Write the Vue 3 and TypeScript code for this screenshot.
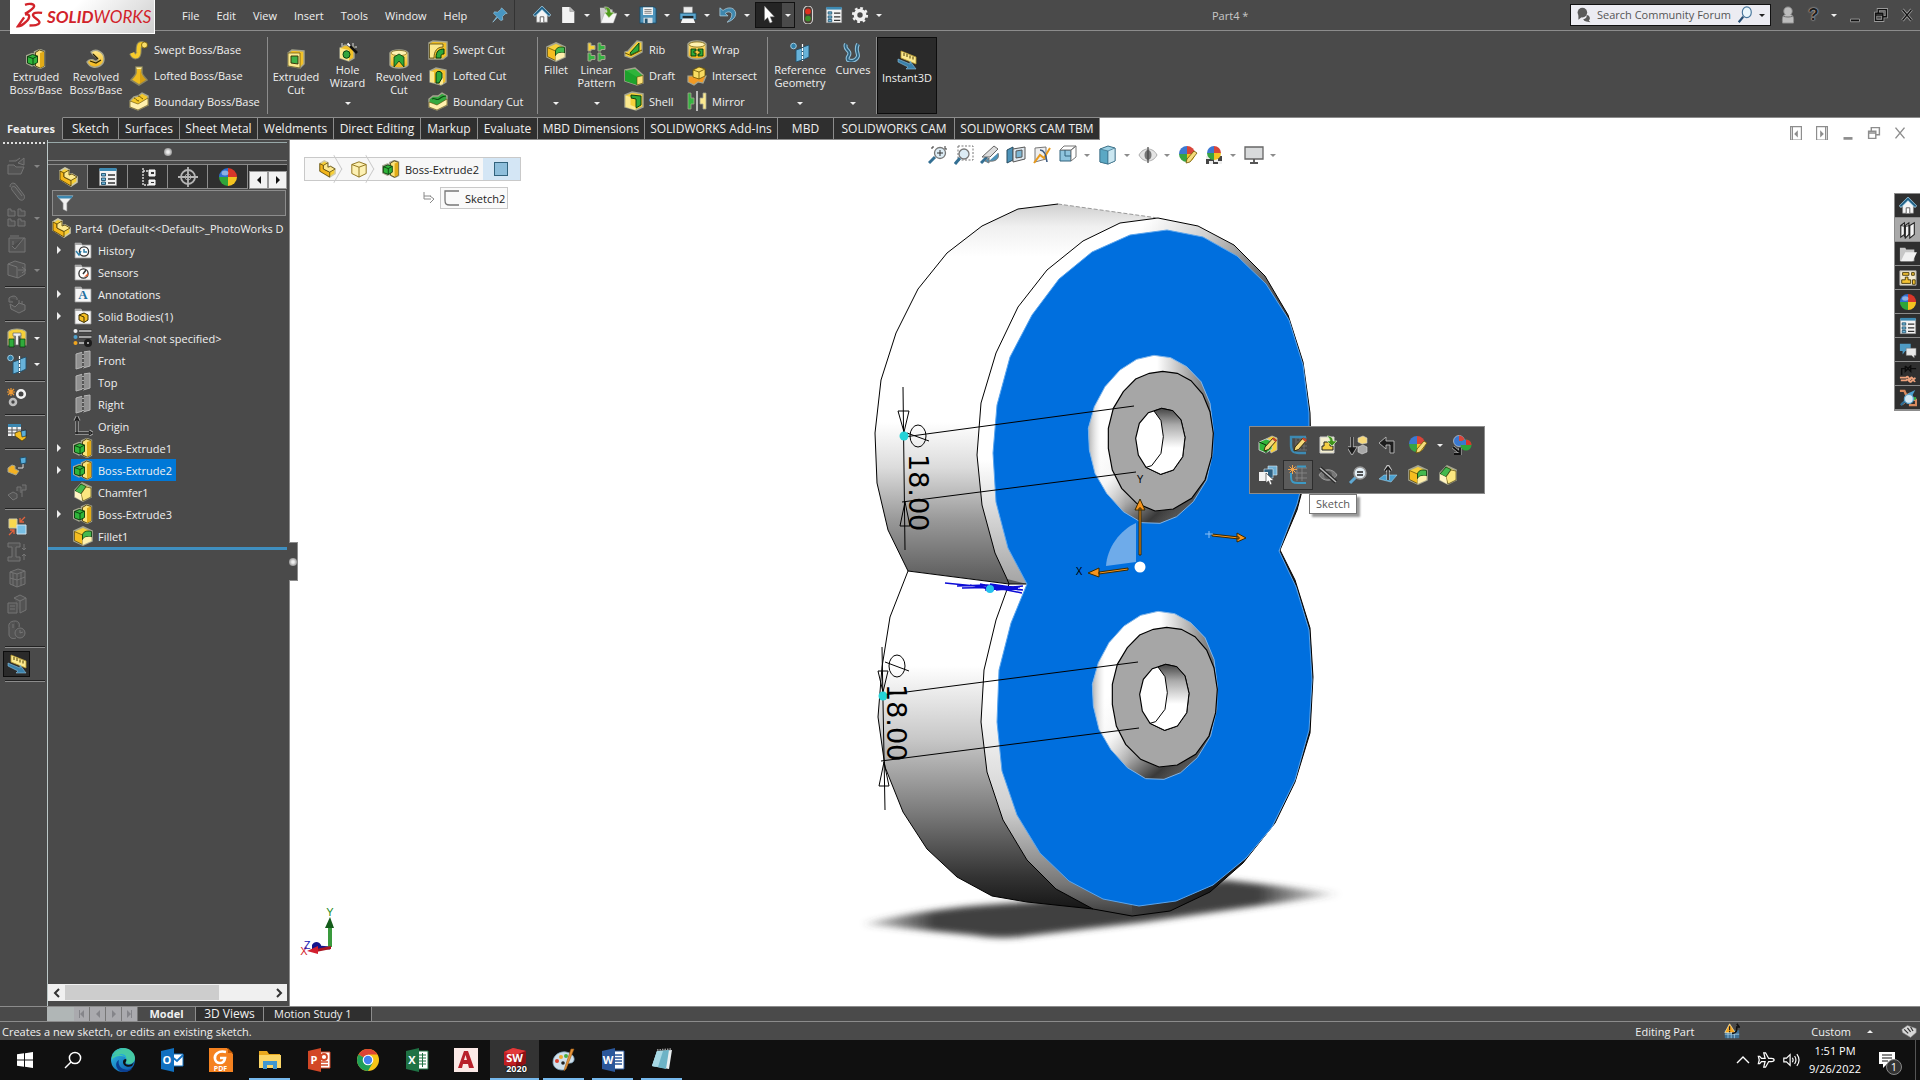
<script setup lang="ts">
import { ref } from 'vue'

interface BigTool { icon: string; lines: string[]; w: number; menu?: boolean }
interface SmallTool { icon: string; label: string }
interface RibbonGroup { big: BigTool[]; columns: { w: number; tools: SmallTool[] }[] }
interface IconTool { icon: string; label: string; menu?: boolean; active?: boolean; muted?: boolean }
interface TreeNode { label: string; icon: string; open?: boolean; selected?: boolean; letter?: string }
interface App { icon: string; label: string; running?: boolean; current?: boolean; mark?: string; sub?: string }

const menus = ['File', 'Edit', 'View', 'Insert', 'Tools', 'Window', 'Help']

const quick: IconTool[] = [
  { icon: 'home', label: 'Welcome' },
  { icon: 'page', label: 'New', menu: true },
  { icon: 'open', label: 'Open', menu: true },
  { icon: 'save', label: 'Save', menu: true },
  { icon: 'print', label: 'Print', menu: true },
  { icon: 'undo', label: 'Undo', menu: true },
  { icon: 'cursor', label: 'Select', menu: true, active: true },
  { icon: 'traffic', label: 'Rebuild' },
  { icon: 'list', label: 'File Properties' },
  { icon: 'gear', label: 'Options', menu: true },
]

const ribbon: RibbonGroup[] = [
  {
    big: [
      { icon: 'extrude', lines: ['Extruded', 'Boss/Base'], w: 60 },
      { icon: 'revolve', lines: ['Revolved', 'Boss/Base'], w: 60 },
    ],
    columns: [{
      w: 141,
      tools: [
        { icon: 'sweep', label: 'Swept Boss/Base' },
        { icon: 'loft', label: 'Lofted Boss/Base' },
        { icon: 'boundary', label: 'Boundary Boss/Base' },
      ],
    }],
  },
  {
    big: [
      { icon: 'cut', lines: ['Extruded', 'Cut'], w: 52 },
      { icon: 'hole', lines: ['Hole', 'Wizard'], w: 51, menu: true },
      { icon: 'revcut', lines: ['Revolved', 'Cut'], w: 52 },
    ],
    columns: [{
      w: 112,
      tools: [
        { icon: 'sweptcut', label: 'Swept Cut' },
        { icon: 'loftcut', label: 'Lofted Cut' },
        { icon: 'boundcut', label: 'Boundary Cut' },
      ],
    }],
  },
  {
    big: [
      { icon: 'fillet', lines: ['Fillet'], w: 32, menu: true },
      { icon: 'pattern', lines: ['Linear', 'Pattern'], w: 49, menu: true },
    ],
    columns: [
      {
        w: 63,
        tools: [
          { icon: 'rib', label: 'Rib' },
          { icon: 'draft', label: 'Draft' },
          { icon: 'shell', label: 'Shell' },
        ],
      },
      {
        w: 83,
        tools: [
          { icon: 'wrap', label: 'Wrap' },
          { icon: 'intersect', label: 'Intersect' },
          { icon: 'mirror', label: 'Mirror' },
        ],
      },
    ],
  },
  {
    big: [
      { icon: 'refgeo', lines: ['Reference', 'Geometry'], w: 60, menu: true },
      { icon: 'curves', lines: ['Curves'], w: 46, menu: true },
    ],
    columns: [],
  },
]

const tabs = [
  { label: 'Features', w: 63 },
  { label: 'Sketch', w: 56 },
  { label: 'Surfaces', w: 61 },
  { label: 'Sheet Metal', w: 78 },
  { label: 'Weldments', w: 76 },
  { label: 'Direct Editing', w: 87 },
  { label: 'Markup', w: 57 },
  { label: 'Evaluate', w: 60 },
  { label: 'MBD Dimensions', w: 107 },
  { label: 'SOLIDWORKS Add-Ins', w: 133 },
  { label: 'MBD', w: 56 },
  { label: 'SOLIDWORKS CAM', w: 121 },
  { label: 'SOLIDWORKS CAM TBM', w: 145 },
]
const activeTab = ref('Features')

const mdi = [
  { icon: 'paneleft', label: 'Collapse left' },
  { icon: 'paneright', label: 'Collapse right' },
  { icon: 'min', label: 'Minimize document' },
  { icon: 'restore', label: 'Restore document' },
  { icon: 'close', label: 'Close document' },
]

const rail: IconTool[][] = [
  [
    { icon: 'r-open', label: 'Insert part', menu: true, muted: true },
    { icon: 'r-clip', label: 'Mate', muted: true },
    { icon: 'r-grid', label: 'Component pattern', menu: true, muted: true },
    { icon: 'r-edit', label: 'Edit sketch', muted: true },
    { icon: 'r-move', label: 'Move component', menu: true, muted: true },
  ],
  [{ icon: 'r-hand', label: 'Show hidden', muted: true }],
  [
    { icon: 'asmfeat', label: 'Assembly features', menu: true },
    { icon: 'refgeo', label: 'Reference geometry', menu: true },
  ],
  [{ icon: 'motion', label: 'New motion study' }],
  [{ icon: 'bom', label: 'Bill of materials' }],
  [
    { icon: 'explode', label: 'Exploded view' },
    { icon: 'r-parts', label: 'Explode line sketch', muted: true },
  ],
  [
    { icon: 'interfere', label: 'Interference detection' },
    { icon: 'r-beam', label: 'Clearance', muted: true },
    { icon: 'r-cage', label: 'Hole alignment', muted: true },
    { icon: 'r-box', label: 'Visualization', muted: true },
    { icon: 'r-clock', label: 'Performance evaluation', muted: true },
  ],
  [{ icon: 'instant', label: 'Instant3D', active: true }],
]

const managerTabs: IconTool[] = [
  { icon: 'part', label: 'FeatureManager' },
  { icon: 'list', label: 'PropertyManager' },
  { icon: 'config', label: 'ConfigurationManager' },
  { icon: 'target', label: 'DimXpertManager' },
  { icon: 'ball', label: 'DisplayManager' },
]

const tree: TreeNode[] = [
  { label: 'History', icon: 'f-history', open: true },
  { label: 'Sensors', icon: 'f-sensor' },
  { label: 'Annotations', icon: 'f-base', open: true, letter: 'A' },
  { label: 'Solid Bodies(1)', icon: 'f-solid', open: true },
  { label: 'Material <not specified>', icon: 'material' },
  { label: 'Front', icon: 'plane' },
  { label: 'Top', icon: 'plane' },
  { label: 'Right', icon: 'plane' },
  { label: 'Origin', icon: 'origin' },
  { label: 'Boss-Extrude1', icon: 'extrude', open: true },
  { label: 'Boss-Extrude2', icon: 'extrude', open: true, selected: true },
  { label: 'Chamfer1', icon: 'chamfer' },
  { label: 'Boss-Extrude3', icon: 'extrude', open: true },
  { label: 'Fillet1', icon: 'fillet' },
]

const headsUp: IconTool[] = [
  { icon: 'zoomfit', label: 'Zoom to fit' },
  { icon: 'zoomarea', label: 'Zoom to area' },
  { icon: 'prev', label: 'Previous view' },
  { icon: 'section', label: 'Section view' },
  { icon: 'dynview', label: 'Dynamic annotation views' },
  { icon: 'orient', label: 'View orientation', menu: true },
  { icon: 'cube', label: 'Display style', menu: true },
  { icon: 'eye', label: 'Hide or show items', menu: true },
  { icon: 'appear', label: 'Edit appearance' },
  { icon: 'scene', label: 'Apply scene', menu: true },
  { icon: 'monitor', label: 'View settings', menu: true },
]

const contextRows: IconTool[][] = [
  [
    { icon: 'editfeat', label: 'Edit Feature' },
    { icon: 'editsketch', label: 'Edit Sketch' },
    { icon: 'paste', label: 'Feature Properties' },
    { icon: 'suppress', label: 'Suppress' },
    { icon: 'rollback', label: 'Rollback' },
    { icon: 'appear', label: 'Appearances', menu: true },
    { icon: 'copyapp', label: 'Copy Appearance' },
  ],
  [
    { icon: 'selother', label: 'Select Other' },
    { icon: 'sketch', label: 'Sketch', active: true },
    { icon: 'hide', label: 'Hide' },
    { icon: 'zoomsel', label: 'Zoom to Selection' },
    { icon: 'normal', label: 'Normal To' },
    { icon: 'fillet', label: 'Fillet' },
    { icon: 'chamfer', label: 'Chamfer' },
  ],
]

const taskPane: IconTool[] = [
  { icon: 'home', label: 'Resources' },
  { icon: 'books', label: 'Design Library', active: true },
  { icon: 'folder', label: 'File Explorer' },
  { icon: 'palette', label: 'View Palette' },
  { icon: 'ball', label: 'Appearances' },
  { icon: 'list', label: 'Custom Properties' },
  { icon: 'chat', label: 'Forum' },
  { icon: 'spring', label: 'Simulation' },
  { icon: 'inspect', label: 'Inspection' },
]

const apps: App[] = [
  { icon: 'win', label: 'Start' },
  { icon: 'search', label: 'Search' },
  { icon: 'edge', label: 'Edge' },
  { icon: 'outlook', label: 'Outlook', mark: 'O' },
  { icon: 'foxit', label: 'PDF', sub: 'PDF' },
  { icon: 'explorer', label: 'File Explorer', running: true },
  { icon: 'ppt', label: 'PowerPoint', mark: 'P' },
  { icon: 'chrome', label: 'Chrome' },
  { icon: 'excel', label: 'Excel', mark: 'X' },
  { icon: 'acad', label: 'AutoCAD' },
  { icon: 'sw', label: 'SolidWorks', running: true, current: true, mark: 'SW', sub: '2020' },
  { icon: 'paint', label: 'Paint', running: true },
  { icon: 'word', label: 'Word', running: true, mark: 'W' },
  { icon: 'notepad', label: 'Notepad', running: true },
]
</script>

<template>
  <div class="app">
    <svg class="defs" aria-hidden="true">
      <defs>
        <linearGradient id="g-upper" gradientUnits="userSpaceOnUse" x1="0" y1="204" x2="0" y2="580">
          <stop offset="0" stop-color="#cfcfcf" /><stop offset=".06" stop-color="#f0f0f0" />
          <stop offset=".14" stop-color="#fff" /><stop offset=".58" stop-color="#fff" />
          <stop offset=".7" stop-color="#dcdcdc" /><stop offset=".84" stop-color="#999" /><stop offset="1" stop-color="#5c5c5c" />
        </linearGradient>
        <linearGradient id="g-lower" gradientUnits="userSpaceOnUse" x1="0" y1="580" x2="0" y2="910">
          <stop offset="0" stop-color="#fff" /><stop offset=".26" stop-color="#fff" /><stop offset=".48" stop-color="#c8c8c8" />
          <stop offset=".7" stop-color="#7c7c7c" /><stop offset=".9" stop-color="#333" /><stop offset="1" stop-color="#151515" />
        </linearGradient>
        <linearGradient id="g-rim-up" gradientUnits="userSpaceOnUse" x1="1150" y1="215" x2="1300" y2="330">
          <stop offset="0" stop-color="#fff" /><stop offset=".3" stop-color="#d0d0d0" /><stop offset=".7" stop-color="#666" /><stop offset="1" stop-color="#222" />
        </linearGradient>
        <linearGradient id="g-rim-mid" gradientUnits="userSpaceOnUse" x1="0" y1="460" x2="0" y2="584">
          <stop offset="0" stop-color="#fff" /><stop offset="1" stop-color="#a4a4a4" />
        </linearGradient>
        <linearGradient id="g-rim-low" gradientUnits="userSpaceOnUse" x1="0" y1="700" x2="0" y2="916">
          <stop offset="0" stop-color="#fff" /><stop offset=".5" stop-color="#d0d0d0" /><stop offset=".85" stop-color="#777" /><stop offset="1" stop-color="#3c3c3c" />
        </linearGradient>
        <linearGradient id="g-rim-dark" gradientUnits="userSpaceOnUse" x1="1132" y1="0" x2="1210" y2="0">
          <stop offset="0" stop-color="#3f3f3f" /><stop offset="1" stop-color="#1a1a1a" />
        </linearGradient>
        <linearGradient id="g-boss" gradientUnits="userSpaceOnUse" x1="790" y1="700" x2="1010" y2="960">
          <stop offset="0" stop-color="#fff" /><stop offset=".3" stop-color="#f2f2f2" /><stop offset=".55" stop-color="#a8a8a8" /><stop offset=".8" stop-color="#3a3a3a" /><stop offset="1" stop-color="#666" />
        </linearGradient>
        <linearGradient id="g-boss-l" x1="0" y1="0" x2="1" y2="0">
          <stop offset="0" stop-color="#aaa" stop-opacity=".9" /><stop offset=".1" stop-color="#fff" stop-opacity=".4" /><stop offset=".3" stop-color="#fff" stop-opacity="0" />
          <stop offset=".55" stop-color="#555" stop-opacity="0" /><stop offset="1" stop-color="#555" stop-opacity=".9" />
        </linearGradient>
        <linearGradient id="g-hole" x1="0" y1="0" x2="0" y2="1">
          <stop offset="0" stop-color="#444" /><stop offset=".25" stop-color="#aaa" /><stop offset=".6" stop-color="#fff" /><stop offset="1" stop-color="#fff" />
        </linearGradient>
        <linearGradient id="g-shadow" gradientUnits="userSpaceOnUse" x1="862" y1="0" x2="1345" y2="0">
          <stop offset="0" stop-color="#444" stop-opacity=".2" /><stop offset=".15" stop-color="#404040" /><stop offset=".82" stop-color="#404040" /><stop offset="1" stop-color="#444" stop-opacity="0" />
        </linearGradient>
        <filter id="soft" x="-5%" y="-40%" width="110%" height="180%"><feGaussianBlur stdDeviation="3" /></filter>
        <linearGradient id="g-edge" x1="0" y1="0" x2="1" y2="1"><stop offset="0" stop-color="#2fc3e8" /><stop offset="1" stop-color="#0a4fa8" /></linearGradient>
        <linearGradient id="g-y" x1="0" y1="0" x2="0" y2="1"><stop offset="0" stop-color="#ffe98a" /><stop offset="1" stop-color="#f2b416" /></linearGradient>
      </defs>

      <!-- quick access -->
      <symbol id="home" viewBox="0 0 20 20"><path d="M4 9v9h12V9l-6-6z" fill="#f4f4f4" stroke="#888" stroke-width=".6" /><path d="M8 18v-6h4v6" fill="#fff" stroke="#555" /><path d="M1 11 10 2l9 9" fill="none" stroke="#a8d4ea" stroke-width="3.4" /><path d="M1.500 10.500 10 2l8.500 8.500" fill="none" stroke="#1f5f85" stroke-width="2" /></symbol>
      <symbol id="page" viewBox="0 0 20 20"><path d="M3.500 1H12l5 5v13H3.500z" fill="#f3f3f3" /><path d="M12 1v5h5" fill="#bbb" stroke="#888" stroke-width=".6" /></symbol>
      <symbol id="open" viewBox="0 0 20 20"><path d="M1 2h5l1 2h8v14H2z" fill="#c9c9c9" /><path d="m2 19 4-11h14l-4 11z" fill="#f6f6f6" stroke="#999" stroke-width=".5" /><path d="M6 1c5 0 7 2 7 6h4l-6 6-5-6h3c0-2-1-4-3-6z" fill="#4f9a1c" stroke="#dfeccf" stroke-width=".6" /></symbol>
      <symbol id="save" viewBox="0 0 20 20"><path d="M1 1h16l2 2v16H1z" fill="#4c93bb" stroke="#1c4c68" /><path d="M4.500 1.500h11V10h-11z" fill="#f5f5f5" /><path d="M6 4h8M6 6h8M6 8h8" stroke="#777" /><path d="M5 13h10v6H5z" fill="#d5dde2" /><path d="M6.500 14h3v5h-3z" fill="#24536e" /></symbol>
      <symbol id="print" viewBox="0 0 20 20"><path d="M5 1h10v7H5z" fill="#ececec" stroke="#888" stroke-width=".6" /><path d="M1 8h18v7H1z" fill="#5ba6cf" stroke="#1c4c68" stroke-width=".8" /><path d="M4 11h12v3H4z" fill="#1f2a30" /><path d="M4 14h12l2 5H2z" fill="#f5f5f5" /></symbol>
      <symbol id="undo" viewBox="0 0 20 20"><path d="M1 2v9h9L7 8c4-3 8-1 7 3-.5 2.500-2 4.500-5 7 7-2 11-7 9-12C16 1 9 1 4.500 5z" fill="#3f87ad" stroke="#b5d3e2" stroke-width=".8" /></symbol>
      <symbol id="cursor" viewBox="0 0 20 20"><path d="M5 0v16l3.500-3.200L11 19l2.700-1.200L11.300 12H16z" fill="#fff" stroke="#777" stroke-width=".5" /></symbol>
      <symbol id="traffic" viewBox="0 0 20 20"><rect x="5" y="0" width="10" height="20" rx="5" fill="#4a3c36" stroke="#d6d6d6" stroke-width="1.200" /><circle cx="10" cy="6" r="3.200" fill="#e0301e" /><circle cx="10" cy="14" r="3.200" fill="#3d8f2d" /></symbol>
      <symbol id="list" viewBox="0 0 20 20"><path d="M1.500 2h17v16.500h-17z" fill="#f3f3f3" stroke="#999" stroke-width=".6" /><path d="M1.500 1h17v3h-17z" fill="#3d8ab3" /><path d="M3.500 6.500h4v2.500h-4zM3.500 11h4v2.500h-4zM3.500 15h4v2.500h-4z" fill="#6db4d8" stroke="#1f4f6b" stroke-width=".9" /><path d="M10 8h7M10 12h7M10 16h7" stroke="#333" stroke-width="1.300" /></symbol>
      <symbol id="gear" viewBox="0 0 20 20"><circle cx="10" cy="10" r="5" fill="none" stroke="#efefef" stroke-width="4" /><circle cx="10" cy="10" r="7.700" fill="none" stroke="#efefef" stroke-width="2.600" stroke-dasharray="3 3.050" /></symbol>
      <symbol id="pin" viewBox="0 0 20 20"><path d="m12 1 7 7-2.500.5-3.500 3.500.5 4-2.500 1-4-4L1 19l5-7-4-4 1-2 4 .5L11 3z" fill="#4796c2" stroke="#9cc9e0" stroke-width=".8" /></symbol>

      <!-- features -->
      <symbol id="extrude" viewBox="0 0 20 20"><g stroke="#a5a58f" stroke-width="2.400" fill="#555"><path d="m9 3 5-2 4 1.500V17l-4 2-5-3zM1 7l5-2 5 1.500V14l-5 2.500L1 14z" /></g><path d="m9.500 3.500 4-2.500L18 2.500V17l-4 2-4.500-2z" fill="#fbe37c" stroke="#3d3000" stroke-width=".8" /><path d="M14 4v15l4-2V2.500z" fill="#e2ab17" /><path d="m1.500 7.500 5-2 5 1.500v6.500L7 16l-5.500-2z" fill="#2fb43a" stroke="#07350a" stroke-width=".9" /><path d="m1.500 7.500 5.500 2V16m0-6.500L11.500 7" fill="none" stroke="#07350a" stroke-width=".9" /></symbol>
      <symbol id="revolve" viewBox="0 0 20 20"><path d="M5 3c5-4 13 0 13 7 0 6-6 9-11 8-3-.5-5-3-6-5 2-3 6-3 8-1 3 1 4-3 1-4C8 7 6 5 5 3z" fill="url(#g-y)" stroke="#a5a58f" stroke-width="1.400" /><path d="m4 12 6 2 5-3M7 5l5 5" stroke="#2c2400" stroke-width="1.200" fill="none" /></symbol>
      <symbol id="sweep" viewBox="0 0 20 20"><path d="M3 13c2 5 6 4 6.500 0C10 8 9 4 13 4l3 2" fill="none" stroke="#8a8560" stroke-width="6" /><path d="M3 13c2 5 6 4 6.500 0C10 8 9 4 13 4l3 2" fill="none" stroke="#f6cb2c" stroke-width="4" /><circle cx="15.500" cy="5" r="3" fill="#f9dd69" stroke="#6b5300" stroke-width=".8" /></symbol>
      <symbol id="loft" viewBox="0 0 20 20"><path d="M7 1h6v6c0 2 3 4 5 7l-8 5-8-5c2-3 5-5 5-7z" fill="#eebc1f" stroke="#8a8560" stroke-width="1.500" /><path d="M7 1.500h6L12 3H8z" fill="#fff0a0" /><path d="M11 4v14l6-4c-2-3-5-5-5-7z" fill="#c78c0a" opacity=".6" /></symbol>
      <symbol id="boundary" viewBox="0 0 20 20"><path d="m1 10 4-4 4-1 4-3 6 3v9l-10 5-8-3z" fill="#f4c92b" stroke="#a5a58f" stroke-width="1.400" /><path d="m1 10 8 3 10-6v7l-10 5-8-3z" fill="#fff0ae" stroke="#5b4600" stroke-width=".6" /><path d="M5 7c2 0 2 3 5 3M9 5c2 0 3 2 5 3" fill="none" stroke="#6b5300" /></symbol>
      <symbol id="boundcut" viewBox="0 0 20 20"><path d="m1 8 4-3 5 0 4-3 5 3v9l-10 5-8-3z" fill="#35a93f" stroke="#a5a58f" stroke-width="1.400" /><path d="m1 11 8 3 10-6v6l-10 5-8-3z" fill="#fff0ae" stroke="#5b4600" stroke-width=".6" /><path d="M4 8c3-2 4 2 7 0s3-3 7-3" fill="none" stroke="#0b4d12" stroke-width="1.200" /></symbol>
      <symbol id="cut" viewBox="0 0 20 20"><path d="m2 4 4-3 12 1v13l-4 4-12-2z" fill="#f2c128" stroke="#a5a58f" stroke-width="1.400" /><path d="M2 4h12v15L2 17z" fill="#fbe98f" stroke="#3d3000" stroke-width=".6" /><path d="M5 7h7v8l-7-1z" fill="#3fb248" stroke="#332800" stroke-width=".9" /></symbol>
      <symbol id="hole" viewBox="0 0 20 20"><path d="m2 6 5-3 9 2v11l-5 3-9-3z" fill="#f2c128" stroke="#a5a58f" stroke-width="1.400" /><path d="m2 6 9 2v11l-9-3z" fill="#fbe98f" /><ellipse cx="8.500" cy="12.500" rx="3.500" ry="3.800" fill="#31a53c" stroke="#083f0d" /><path d="m10 2 9 9" stroke="#111" stroke-width="2.600" /><path d="m9.500 1.500 2.500 2.500" stroke="#fff" stroke-width="2" /><path d="M4 1v3M15 1v3M18 4v2" stroke="#ddd" /></symbol>
      <symbol id="revcut" viewBox="0 0 20 20"><path d="M1 4c3-4 15-4 18 0v12c-3 4-15 4-18 0z" fill="url(#g-y)" stroke="#a5a58f" stroke-width="1.400" /><ellipse cx="10" cy="4" rx="8" ry="2.600" fill="#fff2b0" stroke="#6b5300" stroke-width=".6" /><path d="M5 18V8l5-3 5 3v10l-5-6z" fill="#2da83a" stroke="#07350a" stroke-width=".8" /></symbol>
      <symbol id="sweptcut" viewBox="0 0 20 20"><path d="m1 3 4-2 14 1v14l-4 3H1z" fill="#f2c128" stroke="#a5a58f" stroke-width="1.400" /><path d="M1.500 4H15v3C9 7 6 11 6 18H1.500z" fill="#fbe98f" stroke="#3d3000" stroke-width=".7" /><path d="M8 18c0-7 3-9 8-9v5c-3 0-3 1-3 4z" fill="#2da83a" stroke="#07350a" /></symbol>
      <symbol id="loftcut" viewBox="0 0 20 20"><path d="m2 5 6-3 10 2v12l-5 3L2 16z" fill="#f2c128" stroke="#a5a58f" stroke-width="1.400" /><path d="m2 5 4 1v11l-4-1zM12 9l3-1v10l-3 1z" fill="#fbe98f" /><path d="M8 17V8c0-4 6-3 6 0v4l-3 5z" fill="#2da83a" stroke="#07350a" /></symbol>
      <symbol id="fillet" viewBox="0 0 20 20"><path d="m1 5 9-4 9 4v10l-9 4-9-4z" fill="#f6d03a" stroke="#a5a58f" stroke-width="1.600" /><path d="m1.500 5.500 8 3.500v9.500l-8-4z" fill="#f4bd20" stroke="#3d3000" stroke-width=".6" /><path d="M9.500 9C10 6 13 4 18.500 5.500v5.500C14 10 10 11 9.500 14z" fill="#44b94e" stroke="#07350a" stroke-width=".8" /><path d="M9.500 14c1-3 5-4 9-3v4l-9 4z" fill="#fff0ae" /></symbol>
      <symbol id="chamfer" viewBox="0 0 20 20"><path d="m2 8 7-7 9 4v10l-8 4-8-4z" fill="#f9de68" stroke="#a5a58f" stroke-width="1.600" /><path d="m2 9 6-7 5 2.500L8 12z" fill="#44b94e" stroke="#07350a" stroke-width=".8" /><path d="m8 12 5-7 5 1v9l-8 4z" fill="#fbe780" stroke="#3d3000" stroke-width=".6" /><path d="m2 9 6 3 1 7-7-4z" fill="#fff4c4" /></symbol>
      <symbol id="pattern" viewBox="0 0 20 20"><g stroke="#a5a58f" stroke-width="1"><path d="M1 1h3v2.500h4v4H4V9H1z" fill="#f6d03a" /><path d="M11 1h3v2.500h4v4h-4V9h-3zM1 11h3v2.500h4v4H4V19H1zM11 11h3v2.500h4v4h-4V19h-3z" fill="#36b342" /></g></symbol>
      <symbol id="rib" viewBox="0 0 20 20"><path d="m13 1 5 1v10L7 18l-6-2v-4l3-1z" fill="#f6d03a" stroke="#a5a58f" stroke-width="1.300" /><path d="m6 13 9-10v8l-8 4z" fill="#2da83a" stroke="#07350a" stroke-width=".9" /><path d="m1 13 6 2.500L18 10" fill="none" stroke="#6b5300" /></symbol>
      <symbol id="draft" viewBox="0 0 20 20"><path d="m1 4 10-2 8 7v8l-6 2L1 15z" fill="#2fb43a" stroke="#a5a58f" stroke-width="1.500" /><path d="m1 4 12 7v8L1 15z" fill="#1da22c" /><path d="m13 11 6-1.500V17l-6 2z" fill="#fbe07a" stroke="#5b4600" stroke-width=".6" /></symbol>
      <symbol id="shell" viewBox="0 0 20 20"><path d="m1 4 7-3 11 2v13l-7 3L1 16z" fill="#f6d03a" stroke="#a5a58f" stroke-width="1.500" /><path d="m7 4 10 1v9l-5 3V8L7 7z" fill="#2da83a" stroke="#07350a" stroke-width=".9" /><path d="m1.500 4.500 5 1.500v8l5 2v3l-10-3z" fill="#fbe98f" /></symbol>
      <symbol id="wrap" viewBox="0 0 20 20"><path d="M1 4c3-4 15-4 18 0v12c-3 4-15 4-18 0z" fill="url(#g-y)" stroke="#a5a58f" stroke-width="1.400" /><ellipse cx="10" cy="4.500" rx="8" ry="2.600" fill="#fff2b0" stroke="#6b5300" stroke-width=".7" /><path d="M4 9h5v2H7v2h2v3H4zM11 9h5v7h-5v-2h2v-3h-2z" fill="#2da83a" stroke="#07350a" stroke-width=".9" /></symbol>
      <symbol id="intersect" viewBox="0 0 20 20"><path d="M1 10h6V8l4 2h8l-3 7-5-1-4 3-6-3z" fill="#f29a24" stroke="#a5a58f" stroke-width="1.200" /><path d="m6 4 6-3 6 2v7l-6 3-6-2z" fill="#f9dc62" stroke="#6b5300" stroke-width=".8" /><path d="m6 4 6 2v7M12 6l6-3" fill="none" stroke="#6b5300" stroke-width=".8" /></symbol>
      <symbol id="mirror" viewBox="0 0 20 20"><path d="M1 2h3v5h3v6H4v5H1z" fill="#36b342" stroke="#a5a58f" stroke-width=".8" /><path d="M19 2h-3v5h-3v6h3v5h3z" fill="#fbe98f" stroke="#a5a58f" stroke-width=".8" /><path d="M10 0v20" stroke="#eee" stroke-width="1.400" /></symbol>
      <symbol id="refgeo" viewBox="0 0 20 20"><circle cx="3.500" cy="4" r="2.800" fill="#2f7fa8" stroke="#9cc9e0" /><path d="m6 8 6-2v12l-6 2zM13 5l6-2v12l-6 3z" fill="#67b2d9" stroke="#1f4f6b" stroke-width=".9" /><path d="M12.500 2v17" stroke="#fff" stroke-width="1.200" stroke-dasharray="3 1" /></symbol>
      <symbol id="curves" viewBox="0 0 20 20"><path d="M3 2c-2 4 1 5 3 8 2 4-3 4-1 8 4 2 9 0 10-4 0-4-3-6 0-12" fill="none" stroke="#8dc0db" stroke-width="4" /><path d="M3 2c-2 4 1 5 3 8 2 4-3 4-1 8 4 2 9 0 10-4 0-4-3-6 0-12" fill="none" stroke="#2c5f7c" stroke-width="1.800" /></symbol>
      <symbol id="instant" viewBox="0 0 20 20"><path d="m4 1 15 6v7L4 8z" fill="#fbe98f" stroke="#b79a30" stroke-width=".8" /><path d="m7 3v3M10 4v3M13 5.500v3M16 6.500v3" stroke="#4c3a00" /><path d="m1 9 12 5V11l6 8H9l2-2-10-5z" fill="#3a81ab" stroke="#8fc0da" stroke-width=".6" /></symbol>

      <!-- heads-up view toolbar -->
      <symbol id="zoomfit" viewBox="0 0 20 20"><path d="m1 18 6-6" stroke="#336f93" stroke-width="3" /><circle cx="12" cy="8" r="5.500" fill="#dcecf5" stroke="#777" stroke-width="1.300" /><path d="M12 5v6M9 8h6M17 1v3h2M5 1v2H3" stroke="#333" fill="none" /></symbol>
      <symbol id="zoomarea" viewBox="0 0 20 20"><path d="M4 1h15v14H4z" fill="none" stroke="#777" stroke-dasharray="2 1.500" /><path d="m1 19 5-6" stroke="#336f93" stroke-width="3" /><circle cx="10" cy="9" r="5" fill="#dcecf5" stroke="#777" stroke-width="1.300" /></symbol>
      <symbol id="prev" viewBox="0 0 20 20"><path d="m1 18 6-6" stroke="#336f93" stroke-width="3" /><path d="M2 12 14 1l4 3-8 8z" fill="#ddd" stroke="#666" /><path d="M18 8c2 6-3 9-9 8m0-3v5l-4-2z" fill="#4d93b9" stroke="#777" /></symbol>
      <symbol id="section" viewBox="0 0 20 20"><path d="m1 5 6-3v13l-6 3z" fill="#4d93b9" stroke="#274b5e" /><path d="m7 4 12-2v12L7 17z" fill="#dfe8ee" stroke="#555" /><path d="m10 6 6-1v7l-6 1z" fill="#7db6d3" stroke="#555" /></symbol>
      <symbol id="dynview" viewBox="0 0 20 20"><path d="m3 3 11-1v12l-11 3z" fill="#eee" stroke="#777" /><path d="m2 18 6-8 4 3 6-10" fill="none" stroke="#e89a1c" stroke-width="2" /><path d="M8 5c3 0 6 3 7 12" fill="none" stroke="#3c5a80" stroke-width="1.600" /></symbol>
      <symbol id="orient" viewBox="0 0 20 20"><path d="M2 5h11v11H2z" fill="#8fc4de" stroke="#31627c" /><path d="m2 5 4-4h12l-5 4zM13 5l5-4v11l-5 4z" fill="#fff" stroke="#777" /><path d="M7 5v6h6" fill="none" stroke="#31627c" /></symbol>
      <symbol id="cube" viewBox="0 0 20 20"><path d="m2 4 8-3 7 2v13l-7 3-8-2z" fill="#9bd0e4" stroke="#3a6f86" /><path d="m2 4 8 2v13l-8-2z" fill="#5ba8c4" stroke="#3a6f86" stroke-width=".7" /><path d="m10 6 7-3v13l-7 3z" fill="#cbe7f1" stroke="#3a6f86" stroke-width=".7" /></symbol>
      <symbol id="eye" viewBox="0 0 20 20"><path d="M1 10c4-8 14-8 18 0-4 8-14 8-18 0z" fill="#e4e4e4" stroke="#aaa" /><ellipse cx="10" cy="10" rx="3.500" ry="5" fill="#777" /><path d="M10 2v16" stroke="#444" stroke-width="1.200" /></symbol>
      <symbol id="ball" viewBox="0 0 20 20"><path d="M10 10V1a9 9 0 0 0-9 9z" fill="#2f6fd0" /><path d="M10 10V1a9 9 0 0 1 9 9z" fill="#d8362a" /><path d="M10 10H1a9 9 0 0 0 9 9z" fill="#2fa53a" /><path d="M10 10h9a9 9 0 0 1-9 9z" fill="#f4c320" /><ellipse cx="7" cy="6" rx="3.500" ry="2.500" fill="#fff" opacity=".45" /></symbol>
      <symbol id="appear" viewBox="0 0 20 20"><path d="M9 9V1a8 8 0 0 0-8 8z" fill="#3c78d2" /><path d="M9 9V1a8 8 0 0 1 8 8z" fill="#d8453a" /><path d="M9 9H1a8 8 0 0 0 8 8z" fill="#38a343" /><path d="M9 9h8a8 8 0 0 1-8 8z" fill="#f4c320" /><path d="m8 18 1-4 7-8 3 2-7 9z" fill="#f6dc7c" stroke="#6b5300" stroke-width=".8" /></symbol>
      <symbol id="scene" viewBox="0 0 20 20"><path d="M2 11h16v8H2z" fill="#444" /><path d="M2 11h4v3H2zM10 14h4v3h-4zM5 16h4v3H5zM14 16h4v3h-4z" fill="#eee" /><path d="M10 8V1a7 7 0 0 0-7 7z" fill="#3c78d2" /><path d="M10 8V1a7 7 0 0 1 7 7z" fill="#d8453a" /><path d="M10 8H3a7 7 0 0 0 7 7z" fill="#38a343" /><path d="M10 8h7a7 7 0 0 1-7 7z" fill="#f4c320" /></symbol>
      <symbol id="monitor" viewBox="0 0 20 20"><path d="M1 2h18v12H1z" fill="#d8dadb" stroke="#666" stroke-width="1.300" /><path d="M10 14v4M6 18h8" stroke="#555" stroke-width="1.800" /></symbol>
      <symbol id="body" viewBox="0 0 20 20"><path d="m2 5 8-3 8 3v10l-8 4-8-4z" fill="#fdf1b4" stroke="#8a6d12" /><path d="m2 5 8 3v11M10 8l8-3" fill="none" stroke="#8a6d12" /></symbol>

      <!-- window and document controls -->
      <symbol id="paneleft" viewBox="0 0 20 20"><path d="M4 3h12v15H4zM6 3v15" fill="none" stroke="#8d8d8d" stroke-width="1.300" /><path d="m12 7-4 4 4 4z" fill="#8d8d8d" /></symbol>
      <symbol id="paneright" viewBox="0 0 20 20"><path d="M4 3h12v15H4zM14 3v15" fill="none" stroke="#8d8d8d" stroke-width="1.300" /><path d="m8 7 4 4-4 4z" fill="#8d8d8d" /></symbol>
      <symbol id="min" viewBox="0 0 20 20"><path d="M5 14.500h10v3H5z" fill="currentColor" stroke="var(--halo)" /></symbol>
      <symbol id="restore" viewBox="0 0 20 20"><path d="M4 8h8v8H4zM7 8V4h9v8h-4M4 10h8" fill="none" stroke="var(--halo)" stroke-width="3.400" /><path d="M4 8h8v8H4zM7 8V4h9v8h-4M4 10h8" fill="none" stroke="currentColor" stroke-width="1.600" /></symbol>
      <symbol id="close" viewBox="0 0 20 20"><path d="m5 4 10 12M15 4 5 16" stroke="var(--halo)" stroke-width="3.400" /><path d="m5 4 10 12M15 4 5 16" stroke="currentColor" stroke-width="1.600" /></symbol>
      <symbol id="user" viewBox="0 0 20 20"><path d="M4 19c-1-7 1-9 3-9.500C4 7 5 1 10 1s6 6 3 8.500c2 .5 4 2.500 3 9.500z" fill="#bdbdbd" stroke="#8b8b8b" /><path d="M5 11.500c3 1 7 1 10 0" stroke="#666" fill="none" /></symbol>
      <symbol id="bubble" viewBox="0 0 20 20"><circle cx="8" cy="7" r="6" fill="#5a5a5a" /><path d="M3 10v6l5-4zM13 10a4 4 0 0 1 3 7l2 2-5-1a4 4 0 0 1-4-3c3 0 5-2 4-5z" fill="#5a5a5a" /></symbol>
      <symbol id="lens" viewBox="0 0 20 20"><path d="m3 18 5-6" stroke="#274f74" stroke-width="2.400" /><ellipse cx="12" cy="7" rx="5" ry="6" fill="#eaf6fc" stroke="#49779c" stroke-width="1.300" /></symbol>

      <!-- tree -->
      <symbol id="part" viewBox="0 0 20 20"><path d="m2 4 5-3 4 2v5l3-1 5 3v5l-6 4L2 12z" fill="#f7cf37" stroke="#cfcaa8" stroke-width="1.600" /><path d="m2 4 4 2v4l7 3.500V19L2 12.500z" fill="#f3b61b" stroke="#4c3a00" stroke-width=".8" /><path d="m6 6 5-3v5l3-1 5 3-6 3.500L6 10z" fill="#fce88d" stroke="#4c3a00" stroke-width=".8" /></symbol>
      <symbol id="config" viewBox="0 0 20 20"><path d="M5 1v17h6M5 4h6" fill="none" stroke="#ddd" stroke-width="1.400" stroke-dasharray="2 1" /><path d="M11 3h6v6h-6zM11 13h6v5h-6z" fill="#e8e8e8" stroke="#fff" /><path d="M13 5h3v2h-3zM13 15h3v1h-3z" fill="#333" /></symbol>
      <symbol id="target" viewBox="0 0 20 20"><circle cx="10" cy="10" r="7" fill="none" stroke="#b5b5b5" stroke-width="1.800" /><circle cx="10" cy="10" r="3" fill="#333" stroke="#999" /><path d="M10 0v20M0 10h20" stroke="#b5b5b5" stroke-width="1.800" /></symbol>
      <symbol id="funnel" viewBox="0 0 20 20"><path d="M1 2h18l-7 8v9l-4-2v-7z" fill="#f2f2f2" stroke="#bbb" stroke-width=".6" /><path d="M1 2h18l-2 3H3z" fill="#3c87b0" /></symbol>
      <symbol id="f-base" viewBox="0 0 20 20"><path d="M2 3h6l1 2h9v13H2z" fill="#f5f5f5" stroke="#999" stroke-width=".8" /><path d="M2 3h6l1 2H2z" fill="#aaa" /></symbol>
      <symbol id="f-history" viewBox="0 0 20 20"><use href="#f-base" /><circle cx="11" cy="11.500" r="4.600" fill="#fff" stroke="#333" stroke-width="1.300" /><path d="M11 9v3h3M3 11l3 4 2-4" fill="none" stroke="#2f7fa8" stroke-width="1.500" /></symbol>
      <symbol id="f-sensor" viewBox="0 0 20 20"><use href="#f-base" /><circle cx="10.500" cy="11.500" r="4.600" fill="#fff" stroke="#333" stroke-width="1.300" /><path d="m10 12 3-4" stroke="#333" stroke-width="1.500" /><path d="m11 15 4-1v-3z" fill="#e05a2b" /></symbol>
      <symbol id="f-solid" viewBox="0 0 20 20"><use href="#f-base" /><path d="m6 9 5-2 4 2v5l-4 2.500L6 14z" fill="#f4bd20" stroke="#3d3000" /><path d="m6 9 5 2v5" fill="none" stroke="#3d3000" /></symbol>
      <symbol id="material" viewBox="0 0 20 20"><path d="M6 3h13M6 9h13" stroke="#333" stroke-width="3" /><path d="M6 3h12.500M6 9h12.500M6 15h8" stroke="#c9c9c9" stroke-width="1.400" /><circle cx="2.500" cy="3" r="2" fill="#eee" /><circle cx="2.500" cy="9" r="2" fill="#4fa0cb" /><circle cx="2.500" cy="15" r="2" fill="#f0a51f" /><circle cx="15" cy="15" r="2.500" fill="#ccc" stroke="#1b1b1b" stroke-width="3" /></symbol>
      <symbol id="plane" viewBox="0 0 20 20"><path d="m3 4 7-2v15l-7 2zM10 2l7-1v15l-7 2z" fill="#909090" stroke="#b5b5b5" /><path d="M10 1v17" stroke="#2c2c2c" stroke-width="1.300" stroke-dasharray="3 1" /></symbol>
      <symbol id="origin" viewBox="0 0 20 20"><path d="M4 18V3M2 17h15M2 5l2-4 2 4M16 15l3 2-3 2" stroke="#a5a5a5" fill="none" stroke-width="3.400" /><path d="M4 18V3M2 17h15M2 5l2-4 2 4M16 15l3 2-3 2" stroke="#1d1d1d" fill="none" stroke-width="1.400" /></symbol>

      <!-- command rail -->
      <symbol id="asmfeat" viewBox="0 0 20 20"><path d="M1 4c3-4 15-4 18 0v13h-5V8H7v9H1z" fill="#f6d03a" stroke="#a5a58f" stroke-width="1.200" /><path d="M2 11h5v8H2zM13 11h5v8h-5z" fill="#30ab3c" stroke="#07350a" stroke-width=".7" /><path d="M6 5h8v3h-2.500v9h-3V8H6z" fill="#eee" stroke="#666" stroke-width=".7" /></symbol>
      <symbol id="motion" viewBox="0 0 20 20"><path d="M4 0v8M0 4h8M1 1l6 6M7 1 1 7" stroke="#ee9a35" stroke-width="1.200" /><circle cx="14" cy="6" r="3.800" fill="#444" stroke="#f4f4f4" stroke-width="2.600" /><circle cx="6" cy="14" r="3" fill="#444" stroke="#bdbdbd" stroke-width="2.600" /></symbol>
      <symbol id="bom" viewBox="0 0 20 20"><path d="M1 2h13v12H1z" fill="#f3f3f3" /><path d="M1 2h13v3H1z" fill="#3c87b0" /><path d="M1 8h13M1 11h13M5 5v9M10 5v9" stroke="#555" /><path d="m8 11 5-2 6 4v3l-4 3-7-5z" fill="#f4bd20" stroke="#4c3a00" stroke-width=".7" /><path d="m14 9 5-1v6l-4 1z" fill="#5aaed8" stroke="#123" stroke-width=".6" /></symbol>
      <symbol id="explode" viewBox="0 0 20 20"><path d="m1 12 4-3 3 1v3l4 2-3 4-8-3z" fill="#f4b223" stroke="#a5a58f" /><path d="M11 12h5V6" fill="none" stroke="#ddd" /><path d="m13 2 6-1v6l-5 1z" fill="#58aedb" stroke="#1f4f6b" /></symbol>
      <symbol id="interfere" viewBox="0 0 20 20"><path d="M2 3h8v9H2z" fill="#f9d84e" stroke="#cfcaa8" /><path d="M10 9h9v9h-9z" fill="#78bfe4" stroke="#cfe3ee" /><path d="m13 6 5-5M13 2v4h4M7 14l-5 5M7 18v-4H3" fill="none" stroke="#e2623c" stroke-width="1.300" /></symbol>
      <symbol id="r-open" viewBox="0 0 20 20"><path d="M1 18V9h6l2 2h8l-3 7zM2 5h7l4-3M11 7l6-5v7z" /></symbol>
      <symbol id="r-clip" viewBox="0 0 20 20"><path d="M3 5c0-5 5-5 7-1l7 9c2 4-2 7-5 4L5 8c-2-3 2-5 4-2l6 8" /></symbol>
      <symbol id="r-grid" viewBox="0 0 20 20"><path d="M1 1h3v2h4v5H1zM11 1h3v2h4v5h-7zM1 11h3v2h4v5H1zM11 11h3v2h4v5h-7z" /></symbol>
      <symbol id="r-edit" viewBox="0 0 20 20"><path d="M2 4h16v14H2zM3 2h9M5 12l3 3 9-11M6 7v4" /></symbol>
      <symbol id="r-move" viewBox="0 0 20 20"><path d="m1 4 7-3 10 3v10l-7 4-10-3zM1 4l9 3v11M11 10h7m-3-3 4 3-4 3" /></symbol>
      <symbol id="r-hand" viewBox="0 0 20 20"><path d="M2 4c5-4 9-1 8 2M2 4v4h4M3 10l5 3 4-4 6 2v5l-6 3-8-4zM12 9V6M15 10V7" /></symbol>
      <symbol id="r-parts" viewBox="0 0 20 20"><path d="m1 13 5-3 4 2v4l-4 2zM10 9V5h4v6M15 3h4v5h-4v7" /></symbol>
      <symbol id="r-beam" viewBox="0 0 20 20"><path d="M1 1h12v4H9v10h4v4H1v-4h4V5H1zM17 2v6m-2-2 2 2 2-2M17 18v-6m-2 2 2-2 2 2" /></symbol>
      <symbol id="r-cage" viewBox="0 0 20 20"><path d="m3 4 8-3 7 2v13l-8 3-7-3zM3 4l7 2v13M10 6l8-3M6 5v12M14 4v13M3 10l7 2 8-3" /></symbol>
      <symbol id="r-box" viewBox="0 0 20 20"><path d="m7 4 6-3 6 3v12l-6 3M7 4l6 3v12M13 7l6-3M1 9h9v10H1zM3 12h5M3 15h5" /></symbol>
      <symbol id="r-clock" viewBox="0 0 20 20"><path d="M8 1C3 1 1 4 2 8v7c1 4 5 4 7 3M8 1c4 0 5 3 4 6" /><circle cx="13" cy="13" r="5" /><path d="M13 10v3l3-1M6 4v4" /></symbol>

      <!-- context toolbar -->
      <symbol id="pencil" viewBox="0 0 20 20"><path d="m6 16 1-4 8-9 3.500 2.500-8 9z" fill="#f6d97a" stroke="#2d2200" stroke-width=".9" /><path d="m14 4 1.500-1.500L19 5l-1.500 2z" fill="#c7492f" /></symbol>
      <symbol id="editfeat" viewBox="0 0 20 20"><path d="m8 4 6-3 5 2v12l-6 3z" fill="#f6d03a" stroke="#bbb" stroke-width=".8" /><path d="m1 7 7-3 6 2v8l-6 4-7-3z" fill="#2fb43a" stroke="#d0d0d0" stroke-width=".9" /><path d="m1 7 7 3v8" fill="none" stroke="#07350a" /><use href="#pencil" /></symbol>
      <symbol id="editsketch" viewBox="0 0 20 20"><path d="M9 3h10M9 7h10M9 11h10M9 15h10M8 1v14M12 1v14M16 1v14" stroke="#777" stroke-width=".8" /><path d="M18 2H3v8c0 6 2 8 8 8h7" fill="none" stroke="#3d8ab3" stroke-width="2.400" /><use href="#pencil" /></symbol>
      <symbol id="paste" viewBox="0 0 20 20"><path d="M2 2h14v16H2z" fill="#f3eecf" stroke="#ccc" /><path d="M6 7h6v4h3v4H4v-4h2z" fill="#f4cf45" stroke="#222" /><path d="M9 1c4 0 6 2 6 5h4l-5 5-5-5h3c0-2-1-3-3-5z" fill="#3f941c" stroke="#dfeccf" stroke-width=".6" /></symbol>
      <symbol id="suppress" viewBox="0 0 20 20"><path d="M4 2v13M1 13l3 5 3-5z" stroke="#aaa" stroke-width="3.400" /><path d="M4 2v13M1 13l3 5 3-5z" stroke="#1b1b1b" stroke-width="1.600" fill="#1b1b1b" /><path d="m10 3 5-2 4 2v5l-5 1-4-2z" fill="#f6d87a" stroke="#ccc" stroke-width=".6" /><path d="m10 12 5-2 4 2v5l-5 2-4-2z" fill="#a9a9a9" stroke="#ddd" stroke-width=".6" /></symbol>
      <symbol id="rollback" viewBox="0 0 20 20"><path d="m8 2-7 6 7 6v-4h4v8h4V6H8z" fill="#1d1d1d" stroke="#bbb" stroke-width=".9" /></symbol>
      <symbol id="copyapp" viewBox="0 0 20 20"><circle cx="7" cy="6" r="5.500" fill="#3a78d0" stroke="#ddd" stroke-width=".6" /><path d="M7 6V.5a5.500 5.500 0 0 1 5.500 5.500z" fill="#d8453a" /><circle cx="14" cy="10" r="5.500" fill="#2fa53a" /><path d="M14 10V4.500A5.500 5.500 0 0 0 8.500 10z" fill="#3a78d0" /><path d="M14 10V4.500a5.500 5.500 0 0 1 5.500 5.500z" fill="#d8362a" /><path d="m1 12 6 5m1-4v6H2" fill="none" stroke="#aaa" stroke-width="3.200" /><path d="m1 12 6 5m1-4v6H2" fill="none" stroke="#111" stroke-width="1.800" /></symbol>
      <symbol id="selother" viewBox="0 0 20 20"><path d="M10 1h9v9h-9z" fill="#6fb0d5" stroke="#dcecf5" stroke-width=".6" /><path d="M6 4h9v9H6z" fill="#2d5f80" stroke="#dcecf5" stroke-width=".6" /><path d="M1 7h9v9H1z" fill="#f3f3f3" /><path d="M8 8v10l2.500-2 1.500 4 2-1-1.500-3.500H16z" fill="#fff" stroke="#444" stroke-width=".7" /></symbol>
      <symbol id="sketch" viewBox="0 0 20 20"><path d="M7 3h12M7 8h12M7 13h12M9 1v15M14 1v15" stroke="#8a8a8a" stroke-width=".8" /><path d="M18 1.500H9M3 8v4c0 5 2 6 7 6h8" fill="none" stroke="#3d9ac5" stroke-width="2" /><path d="M4.500 0v9M0 4.500h9M1.500 1.500l6 6M7.500 1.500l-6 6" stroke="#f3a54c" /></symbol>
      <symbol id="hide" viewBox="0 0 20 20"><path d="M1 10c4-7 14-7 18 0-4 7-14 7-18 0z" fill="#777" stroke="#999" /><circle cx="10" cy="10" r="4" fill="#555" /><path d="m2 3 16 14" stroke="#2a2a2a" stroke-width="4" /><path d="m2 3 16 14" stroke="#b7b7b7" stroke-width="1.600" /></symbol>
      <symbol id="zoomsel" viewBox="0 0 20 20"><path d="m2 18 6-6" stroke="#5fa8d2" stroke-width="3" /><circle cx="12" cy="8" r="6" fill="#e4eff5" stroke="#999" stroke-width="1.500" /><path d="M9 7h6M9 10h6" stroke="#222" stroke-width="1.700" /></symbol>
      <symbol id="normal" viewBox="0 0 20 20"><path d="m1 14 5-4h13l-6 7z" fill="#4aa0cf" stroke="#9fd0ea" stroke-width=".6" /><path d="M10 15V3M7 6l3-5 3 5" fill="none" stroke="#c9c9c9" stroke-width="3" /><path d="M10 15V3M7 6l3-4 3 4" fill="none" stroke="#1b1b1b" stroke-width="1.500" /></symbol>

      <!-- task pane -->
      <symbol id="books" viewBox="0 0 20 20"><path d="m2 5 4-3v13l-4 3zM7 5l4-3v13l-4 4zM12 5l5-3v13l-5 4z" fill="#f3f3f3" stroke="#222" stroke-width="1.200" /><path d="m2 5 5 1 5-1M7 6l-1 12" fill="none" stroke="#222" /></symbol>
      <symbol id="folder" viewBox="0 0 20 20"><path d="M1 3h6l1 2h9v13H1z" fill="#c7c7c7" /><path d="m2 18 5-10h13l-5 10z" fill="#f1f1f1" /></symbol>
      <symbol id="palette" viewBox="0 0 20 20"><path d="M1 2h18v16H1z" fill="#f1ead2" stroke="#aaa" /><path d="M4 4h7v3H4zM14 4h3v3h-3zM7 9h3v3h3v4H3v-4h4zM15 12h3v5h-3z" fill="#f4c334" stroke="#332800" stroke-width=".9" /></symbol>
      <symbol id="chat" viewBox="0 0 20 20"><path d="M1 3h12v8H7l-3 4v-4H1z" fill="#4f9bc4" /><path d="M8 8h11v8h-2v3l-3-3H8z" fill="#e8e8e8" stroke="#666" stroke-width=".5" /></symbol>
      <symbol id="spring" viewBox="0 0 20 20"><path d="M3 11V4h4M7 1v6l6-6v6L7 1M13 4h6" fill="none" stroke="#0c0c0c" stroke-width="1.500" /><path d="M1 14h7c2-4 4 5 5 1s3 4 5-1M2 17h6c2-3 4 4 6 1s3 1 4 0" fill="none" stroke="#eda27c" stroke-width="2" /></symbol>
      <symbol id="inspect" viewBox="0 0 20 20"><path d="M1 2h5l2 5 5-2M3 17l3-2M16 12h3v6h-8" fill="none" stroke="#d98a5e" stroke-width="2.600" /><path d="m10 5 8-4-4 8z" fill="#4aa0cf" /><path d="m14 9h5v3h-5z" fill="#35b04a" /><path d="m2 18 6-6" stroke="#2b6b92" stroke-width="2.600" /><circle cx="11" cy="11" r="5" fill="#d4e9f5" stroke="#5fa8d2" stroke-width="1.400" /></symbol>

      <!-- status bar -->
      <symbol id="rebuild" viewBox="0 0 20 20"><path d="M1 9h18v10H1z" fill="#3f7196" /><path d="M5 10v9M9 10v9M13 10v9M1 14h18" stroke="#a7cbe2" /><path d="m1 12 6-11 7 11z" fill="#f6a51d" stroke="#fff2c5" stroke-width=".8" /><path d="M7 4v5M7 10v1.500" stroke="#222" stroke-width="1.500" /><path d="M10 13c6 0 6-4 6-8h3l-3-4" fill="none" stroke="#111" stroke-width="2" /></symbol>
      <symbol id="tag" viewBox="0 0 20 20"><path d="m1 8 7-5 11 4v5l-7 6-10-6z" fill="#d8d8d8" stroke="#888" stroke-width=".7" /><path d="m4 8 5 5M8 6l4 5M12 5l3 5" stroke="#333" stroke-width="1.500" /></symbol>

      <!-- desktop taskbar -->
      <symbol id="win" viewBox="0 0 24 24"><path d="m4 6.300 7-1v6.200H4zM12 5.200 20 4v7.500h-8zM4 12.500h7v6.200l-7-1zM12 12.500h8V20l-8-1.200z" fill="#fff" /></symbol>
      <symbol id="search" viewBox="0 0 24 24"><circle cx="13" cy="10" r="5.600" fill="none" stroke="#fff" stroke-width="1.500" /><path d="m3 20 6-6" stroke="#fff" stroke-width="1.500" /></symbol>
      <symbol id="edge" viewBox="0 0 24 24"><circle cx="12" cy="12" r="12" fill="url(#g-edge)" /><path d="M1 8C3 2 8 0 12 0c7 0 12 5 12 10 0 4-3 6-6 6s-4-1-3-2c2-3-1-6-5-6-5 0-9 2-9 5z" fill="#45c9a4" /><path d="M1 9c2-6 7-9 12-8-5 0-9 2-11 6 5-2 12 0 13 4 1-2-1-5-5-5S2 7 1 9z" fill="#1fa6e0" /><path d="M8 12c-2 6 4 12 13 9-3 3-8 4-12 2-5-3-5-9-1-11z" fill="#0b3f91" /><path d="M15 11c1 2-1 3-.500 4.500C16 18 21 17 23 14l-2 4c-4 2-9 0-9-4 0-2 1-3 3-3z" fill="#101010" /></symbol>
      <symbol id="outlook" viewBox="0 0 24 24"><path d="M10 6h13v12H10z" fill="#fff" stroke="#1272c4" /><path d="m11 8 6 5 6-6" fill="none" stroke="#1272c4" stroke-width="1.800" /><path d="m1 3 13-3v24L1 21z" fill="#1070c0" /></symbol>
      <symbol id="foxit" viewBox="0 0 24 24"><path d="M0 0h18l6 6v18H0z" fill="#f58220" /><path d="M19 0v5h5z" fill="#c25a07" /><path d="M17 4C9 2 5 7 6 11c1 5 9 6 10-1h-5" fill="none" stroke="#fff" stroke-width="2.600" /></symbol>
      <symbol id="explorer" viewBox="0 0 24 24"><path d="M1 3h8l2 3h11v14H1z" fill="#e9a91f" /><path d="M1 7h22v13H1z" fill="#fbd667" /><path d="M5 21v-8h14v8h-4v-4H9v4z" fill="#3f97d0" /></symbol>
      <symbol id="ppt" viewBox="0 0 24 24"><path d="M11 4h12v16H11z" fill="#fff" stroke="#d24726" /><circle cx="17" cy="9" r="3" fill="none" stroke="#d24726" stroke-width="1.800" /><path d="M14 14h7M14 17h7" stroke="#d24726" stroke-width="1.400" /><path d="m1 3 13-3v24L1 21z" fill="#d24726" /></symbol>
      <symbol id="chrome" viewBox="0 0 24 24"><circle cx="12" cy="12" r="11" fill="#f6c416" /><path d="M12 12 2.500 6.500A11 11 0 0 1 21.500 6.500H12z" fill="#dd4534" /><path d="M12 12 2.500 6.500A11 11 0 0 0 12 23l4.700-8.200z" fill="#1f9f58" /><circle cx="12" cy="12" r="5.300" fill="#fff" /><circle cx="12" cy="12" r="4.200" fill="#4382ee" /></symbol>
      <symbol id="excel" viewBox="0 0 24 24"><path d="M11 3h12v18H11z" fill="#fff" stroke="#1f7244" /><path d="M14 7h7M14 10h7M14 13h7M14 16h7M17.500 5v14" stroke="#1f7244" /><path d="m1 3 13-3v24L1 21z" fill="#1f7244" /></symbol>
      <symbol id="acad" viewBox="0 0 24 24"><path d="M0 0h24v24H0z" fill="#fbe9e6" /><path d="M4 20 10 3h4l6 17h-5l-1-4H9l-1 4zM10 12h3l-1.500-5z" fill="#b8202a" fill-rule="evenodd" /></symbol>
      <symbol id="sw" viewBox="0 0 24 24"><path d="m1 4 9-4 13 3v12l-9 6L1 17z" fill="#c01f22" /><path d="m1 4 9-4 13 3-10 4z" fill="#e23a3a" /><path d="M13 7v14l10-6V3z" fill="#8e1114" /></symbol>
      <symbol id="paint" viewBox="0 0 24 24"><path d="M1 14C1 7 8 3 14 4c7 1 10 7 7 10-2 2-5 0-6 3s-1 5-5 5c-5 0-9-3-9-8z" fill="#cfe0ec" stroke="#7fa2bb" stroke-width=".8" /><circle cx="5" cy="13" r="2" fill="#d9402f" /><circle cx="9" cy="9" r="2" fill="#f0a62b" /><circle cx="14" cy="8" r="2" fill="#4aae43" /><circle cx="11" cy="15" r="1.800" fill="#222" /><path d="m22 1-8 20-2 2 1-4 6-18z" fill="#e6943a" stroke="#9c5a14" stroke-width=".6" /></symbol>
      <symbol id="word" viewBox="0 0 24 24"><path d="M11 3h12v18H11z" fill="#fff" stroke="#2b579a" /><path d="M14 7h7M14 10h7M14 13h7M14 16h7" stroke="#2b579a" stroke-width="1.300" /><path d="m1 3 13-3v24L1 21z" fill="#2b579a" /></symbol>
      <symbol id="notepad" viewBox="0 0 24 24"><path d="m7 3 15-1-3 19-17-3z" fill="#e8eef0" /><path d="m7 3 12-1-3 19-14-3z" fill="#6db3c6" /><path d="m7 3 6 0-5 16-6-1z" fill="#a7d8e4" /><path d="m7 2 14-1" stroke="#999" stroke-width="1.600" stroke-dasharray="1.500 1" /></symbol>
      <symbol id="plane-mode" viewBox="0 0 20 20"><path d="M19 10c0-1-1-1.700-3-1.700h-3L9.500 2H7.500L9 8.300H5L3 6H1.500l1 4-1 4H3l2-2.300h4L7.500 18h2l3.500-6.300h3c2 0 3-.7 3-1.700z" fill="none" stroke="#fff" stroke-width="1.400" /></symbol>
      <symbol id="volume" viewBox="0 0 20 20"><path d="M2 8h3l4-4v12l-4-4H2z" fill="none" stroke="#fff" stroke-width="1.300" /><path d="M11.500 7.500c1 1.500 1 3.500 0 5M14 5.500c2 3 2 6 0 9M16.500 3.500c3 4 3 9 0 13" fill="none" stroke="#fff" stroke-width="1.300" /></symbol>
    </svg>

    <header class="titlebar">
      <a class="logo" href="#" aria-label="SOLIDWORKS">
        <svg viewBox="0 0 30 32" class="logo-mark" aria-hidden="true">
          <path d="M10 3c5-2 11-1 10 2-1 3-5 5-10 8M10 14c6-2 6 4 1 8-3 3-6 5-9 5l7-10M29 12c-6-1-11 0-10 3s8 5 7 8-6 3-11 3" fill="none" stroke="#d2232a" stroke-width="2.600" />
        </svg>
        <span class="logo-text"><b>SOLID</b>WORKS</span>
      </a>
      <nav class="menus">
        <button v-for="m in menus" :key="m" type="button">{{ m }}</button>
        <button type="button" class="pin" aria-label="Pin menu"><svg class="ic s16"><use href="#pin" /></svg></button>
      </nav>
      <div class="quick">
        <div v-for="q in quick" :key="q.icon" class="quick-item" :class="{ active: q.active, split: q.menu }">
          <button type="button" :aria-label="q.label"><svg class="ic s18"><use :href="'#' + q.icon" /></svg></button>
          <button v-if="q.menu" type="button" class="drop" :aria-label="q.label + ' menu'"><i class="caret"></i></button>
        </div>
      </div>
      <span class="doc-title">Part4 *</span>
      <div class="title-right">
        <label class="search">
          <svg class="ic s16"><use href="#bubble" /></svg>
          <input type="text" placeholder="Search Community Forum" aria-label="Search Community Forum" />
          <svg class="ic s18"><use href="#lens" /></svg>
          <i class="caret dark"></i>
        </label>
        <button type="button" aria-label="Account"><svg class="ic s18"><use href="#user" /></svg></button>
        <button type="button" class="help" aria-label="Help">?</button>
        <button type="button" class="help-drop" aria-label="Help menu"><i class="caret"></i></button>
        <button type="button" aria-label="Minimize"><svg class="ic s18"><use href="#min" /></svg></button>
        <button type="button" aria-label="Restore"><svg class="ic s18"><use href="#restore" /></svg></button>
        <button type="button" aria-label="Close"><svg class="ic s18"><use href="#close" /></svg></button>
      </div>
    </header>

    <section class="ribbon">
      <div v-for="(g, gi) in ribbon" :key="gi" class="group">
        <button v-for="b in g.big" :key="b.icon" type="button" class="big" :class="{ top: b.menu }" :style="{ width: b.w + 'px' }">
          <svg class="ic s20"><use :href="'#' + b.icon" /></svg>
          <span v-for="l in b.lines" :key="l">{{ l }}</span>
          <i v-if="b.menu" class="caret"></i>
        </button>
        <div v-for="(c, ci) in g.columns" :key="ci" class="column" :style="{ width: c.w + 'px' }">
          <button v-for="s in c.tools" :key="s.icon" type="button"><svg class="ic s20"><use :href="'#' + s.icon" /></svg>{{ s.label }}</button>
        </div>
      </div>
      <button type="button" class="big instant"><svg class="ic s20"><use href="#instant" /></svg><span>Instant3D</span></button>
    </section>

    <nav class="tabs">
      <button v-for="t in tabs" :key="t.label" type="button" :class="{ on: activeTab === t.label }" :style="{ width: t.w + 'px' }" @click="activeTab = t.label">{{ t.label }}</button>
      <div class="mdi">
        <button v-for="m in mdi" :key="m.icon" type="button" :aria-label="m.label"><svg class="ic s18"><use :href="'#' + m.icon" /></svg></button>
      </div>
    </nav>

    <main class="workspace">
      <aside class="rail">
        <div class="grip"></div>
        <div v-for="(g, gi) in rail" :key="gi" class="rail-group">
          <div v-for="r in g" :key="r.icon" class="rail-row">
            <button type="button" :class="{ pressed: r.active, muted: r.muted }" :aria-label="r.label"><svg class="ic s20"><use :href="'#' + r.icon" /></svg></button>
            <i v-if="r.menu" class="caret" :class="{ faded: r.muted }"></i>
          </div>
        </div>
      </aside>

      <div class="side">
        <aside class="manager">
          <div class="handle"><i class="knob"></i></div>
          <div class="manager-tabs">
            <button v-for="(t, i) in managerTabs" :key="t.icon" type="button" :class="{ on: i === 0 }" :aria-label="t.label"><svg class="ic s20"><use :href="'#' + t.icon" /></svg></button>
            <div class="pager">
              <button type="button" aria-label="Previous tabs"><i class="tri left"></i></button>
              <button type="button" aria-label="More tabs"><i class="tri right"></i></button>
            </div>
          </div>
          <label class="filter"><svg class="ic s18"><use href="#funnel" /></svg><input type="text" aria-label="Filter tree" /></label>
          <div class="root"><svg class="ic s20"><use href="#part" /></svg><span>Part4&nbsp; (Default&lt;&lt;Default&gt;_PhotoWorks D</span></div>
          <ul class="tree">
            <li v-for="n in tree" :key="n.label">
              <i class="twist" :class="{ show: n.open }"></i>
              <span class="node" :class="{ selected: n.selected }">
                <span class="node-icon"><svg class="ic s20"><use :href="'#' + n.icon" /></svg><b v-if="n.letter">{{ n.letter }}</b></span>{{ n.label }}
              </span>
            </li>
          </ul>
          <div class="rollbar"></div>
          <div class="hscroll">
            <button type="button" aria-label="Scroll left"><svg viewBox="0 0 8 10" class="chev"><path d="M6 1 2 5l4 4" /></svg></button>
            <div class="track"><div class="thumb"></div></div>
            <button type="button" aria-label="Scroll right"><svg viewBox="0 0 8 10" class="chev"><path d="m2 1 4 4-4 4" /></svg></button>
          </div>
          <button type="button" class="splitter" aria-label="Collapse panel"><i class="knob"></i></button>
        </aside>

        <section class="viewport">
          <svg class="scene" viewBox="290 140 1630 866" role="img" aria-label="Part4 model">
            <path d="M862 924 C920 910 970 905 1030 902 L1226 880 L1260 884 L1342 894 L1200 914 L1144 922 L1026 936 Q1000 940 972 935 Z" fill="url(#g-shadow)" filter="url(#soft)" />
            <path d="M1058 204 1018 209 982 226 947 253 918 289 896 333 881 380 875 433 877 483 888 530 908 571 1009 584 1100 584 1158 218Z" fill="url(#g-upper)" />
            <path d="M908 571 890 617 882 667 878 717 885 767 903 812 927 849 957 877 992 896 1027 902 1093 909 1132 916 1100 584 1009 584Z" fill="url(#g-lower)" />
            <path d="M1158 218 1120 223 1083 241 1047 270 1018 307 996 353 981 403 977 455 982 505 995 553 1007 579 1027 584 1100 500Z" fill="url(#g-rim-mid)" />
            <path d="M1009 584 996 620 984 670 981 722 987 772 1003 820 1027 860 1056 889 1093 909 1132 916 1140 800 1027 584Z" fill="url(#g-rim-low)" />
            <path d="M1120 223 1158 218 1198 226 1234 245 1265 276 1288 315 1303 362 1310 413 1311 457 1297 510 1280 550 1150 500Z" fill="url(#g-rim-up)" />
            <path d="M1280 550 1295 580 1310 628 1313 677 1310 733 1295 782 1275 823 1243 863 1210 892 1170 911 1132 916 1132 800Z" fill="url(#g-rim-dark)" />
            <g class="edges">
              <path d="M1058 204 1018 209 982 226 947 253 918 289 896 333 881 380 875 433 877 483 888 530 908 571 890 617 882 667 878 717 885 767 903 812 927 849 957 877 992 896 1027 902 1093 909" />
              <path d="M1158 218 1198 226 1234 245 1265 276 1288 315 1303 362 1310 413 1311 457 1297 510 1280 550 1295 580 1310 628 1313 677 1310 733 1295 782 1275 823 1243 863 1210 892 1170 911 1132 916 1093 909 1056 889 1027 860 1003 820 987 772 981 722 984 670 996 620 1009 584 1007 579 995 553 982 505 977 455 981 403 996 353 1018 307 1047 270 1083 241 1120 223Z" />
              <path d="M908 571 1009 584 1027 584" />
              <path d="m1058 204 100 14" stroke="#999" stroke-dasharray="4 2" />
            </g>
            <path d="M1167 230 1203 237 1237 256 1266 284 1289 320 1303 365 1309 413 1309 457 1297 504 1279 551 1296 587 1309 630 1312 680 1309 730 1295 780 1272 827 1246 858 1213 885 1176 901 1139 906 1103 899 1069 881 1040 853 1017 815 1002 771 997 722 999 670 1011 623 1027 584 1008 548 996 502 993 453 997 405 1010 357 1032 315 1059 279 1092 252 1130 235Z" fill="#006fde" stroke="#5aa5ee" />

            <g id="boss" transform="translate(860 190) scale(.33333)">
              <path d="M882 496 932 503 980 530 1023 575 1050 640 1060 720 1058 790 1040 870 1000 935 950 980 900 1000 845 998 790 965 740 910 705 850 688 780 685 715 703 650 735 590 780 540 830 508Z" fill="url(#g-boss)" />
              <path d="M882 496 932 503 980 530 1023 575 1050 640 1060 720 1058 790 1040 870 1000 935 950 980 900 1000 845 998 790 965 740 910 705 850 688 780 685 715 703 650 735 590 780 540 830 508Z" fill="url(#g-boss-l)" stroke="#7fb4e8" stroke-width="3" />
              <path d="M908 544 952 550 993 572 1028 612 1050 665 1060 730 1055 800 1035 870 995 925 940 957 885 963 830 940 785 895 757 840 745 775 745 715 760 655 790 605 827 567 868 550Z" fill="#a6a6a6" stroke="#000" stroke-width="3.500" />
              <path d="M905 655 938 662 963 690 975 742 968 800 940 840 902 853 858 832 835 795 827 745 838 700 865 668Z" fill="#fff" stroke="#000" stroke-width="3.500" />
              <path d="M882 663 905 655 938 662 963 690 975 742 968 800 940 840 902 853 858 832 875 827 903 790 910 740 903 692Z" fill="url(#g-hole)" stroke="#000" stroke-width="3" />
            </g>
            <use href="#boss" x="4" y="256" />

            <g class="edges dims">
              <path d="M903 387 905 550M904 437 1134 406M902 502 1136 472M898 411h11l-5 21zM900 526h10l-5-24z" />
              <ellipse cx="918" cy="436" rx="8" ry="11" /><path d="m907 433 22 8" />
              <path d="M882 647 885 810M883 695 1138 662M881 761 1139 728M878 671h10l-5 21zM879 786h10l-5-24z" />
              <ellipse cx="897" cy="666" rx="8" ry="11" /><path d="m885 662 24 9" />
            </g>
            <circle cx="904" cy="436" r="4.500" fill="#25d3d8" /><circle cx="883" cy="696" r="4.500" fill="#25d3d8" />
            <text class="dim" transform="translate(909 454) rotate(90)">18.00</text>
            <text class="dim" transform="translate(887 684) rotate(90)">18.00</text>
            <path d="m945 583 40 4 38 3M957 586l30-1 36 5M962 588l50-1M980 584l42 9M985 590l38-4M992 587l30 6M970 585l24 5M990 584l28 4M996 590l20-2M986 586l34 1" fill="none" stroke="#0c0cd6" stroke-width="1.500" />
            <circle cx="990" cy="589" r="4" fill="#25c3ee" />

            <path d="M1136 523C1120 530 1107 548 1106 566L1136 562Z" fill="#6eabea" />
            <g stroke="#3a2a00" stroke-width="1" fill="#f7941d">
              <path d="M1139 555v-47h2v47zM1135 510l5-11 5 11zM1128 568l-29 4v2l29-4zM1099 568v9l-11-4zM1212 534l27 3v2l-27-3zM1237 533l9 5-9 4z" />
            </g>
            <path d="M1209 531v7M1205 534h8" stroke="#8cc1f5" />
            <circle cx="1140" cy="567" r="5.500" fill="#fff" />
            <text class="axis" x="1140" y="483">Y</text><text class="axis" x="1079" y="575">X</text>

            <g>
              <path d="M312 945c2-4 7-4 9 0v4h-9z" fill="#15158c" /><path d="m318 947 12 1" stroke="#15158c" stroke-width="3" />
              <path d="M328 926h4v21h-4z" fill="#3a9a3e" /><path d="m325 928 5-11 4 11z" fill="#145c1a" />
              <path d="m316 949 15-3v3l-15 3z" fill="#a91521" /><path d="m307 951 11-5v8z" fill="#d31f2e" />
              <text class="axis big-axis" x="330" y="916" fill="#1f8a25">Y</text>
              <text class="axis big-axis" x="304" y="955" fill="#d31f2e">X</text>
              <text class="axis big-axis" x="307" y="949" fill="#1a1ab5">Z</text>
            </g>
          </svg>

          <div class="crumbs">
            <div class="crumb-row">
              <button type="button" aria-label="Part"><svg class="ic s18"><use href="#part" /></svg></button>
              <button type="button" aria-label="Body"><svg class="ic s18"><use href="#body" /></svg></button>
              <button type="button" class="named"><svg class="ic s18"><use href="#extrude" /></svg>Boss-Extrude2</button>
              <button type="button" class="face" aria-label="Face"><i></i></button>
            </div>
            <div class="crumb-sub">
              <svg class="ic s14" viewBox="0 0 14 14"><path d="M2 1v7h7M2 5h7M8 5l4 3-4 4" fill="none" stroke="#888" /></svg>
              <button type="button"><svg class="ic s18" viewBox="0 0 18 18"><path d="M16 2H2v9c0 4 1 5 5 5h9" fill="none" stroke="#777" stroke-width="1.300" /></svg>Sketch2</button>
            </div>
          </div>

          <div class="heads-up">
            <div v-for="h in headsUp" :key="h.icon" class="hud-item">
              <button type="button" :aria-label="h.label"><svg class="ic s20"><use :href="'#' + h.icon" /></svg></button>
              <i v-if="h.menu" class="caret gray"></i>
            </div>
          </div>

          <div class="context">
            <div v-for="(row, ri) in contextRows" :key="ri" class="context-row">
              <template v-for="c in row" :key="c.icon">
                <button type="button" :class="{ active: c.active }" :aria-label="c.label"><svg class="ic s20"><use :href="'#' + c.icon" /></svg></button>
                <i v-if="c.menu" class="caret"></i>
              </template>
            </div>
            <div class="tip" role="tooltip">Sketch</div>
          </div>

          <aside class="task-pane">
            <button v-for="t in taskPane" :key="t.icon" type="button" :class="{ on: t.active }" :aria-label="t.label"><svg class="ic s18"><use :href="'#' + t.icon" /></svg></button>
          </aside>
        </section>
      </div>
    </main>

    <nav class="views">
      <div class="views-pad"></div>
      <button type="button" class="step" aria-label="First"><i class="stop"></i><i class="tri left"></i></button>
      <button type="button" class="step" aria-label="Previous"><i class="tri left"></i></button>
      <button type="button" class="step" aria-label="Next"><i class="tri right"></i></button>
      <button type="button" class="step" aria-label="Last"><i class="tri right"></i><i class="stop"></i></button>
      <button type="button" class="view on">Model</button>
      <button type="button" class="view">3D Views</button>
      <button type="button" class="view wide">Motion Study 1</button>
    </nav>

    <footer class="status">
      <span>Creates a new sketch, or edits an existing sketch.</span>
      <span class="editing">Editing Part</span>
      <svg class="ic s16 rebuild"><use href="#rebuild" /></svg>
      <button type="button" class="units">Custom <i class="caret up"></i></button>
      <svg class="ic s16"><use href="#tag" /></svg>
    </footer>

    <div class="taskbar">
      <button v-for="a in apps" :key="a.icon" type="button" class="app-btn" :class="{ running: a.running, current: a.current }" :aria-label="a.label">
        <span class="app-icon">
          <svg class="ic s24"><use :href="'#' + a.icon" /></svg>
          <span v-if="a.mark" class="mark" :class="{ full: a.current }">{{ a.mark }}</span>
          <span v-if="a.sub" class="sub" :class="{ year: a.current }">{{ a.sub }}</span>
        </span>
      </button>
      <div class="tray">
        <svg class="ic s14" viewBox="0 0 14 14"><path d="m1 10 6-6 6 6" fill="none" stroke="#fff" stroke-width="1.400" /></svg>
        <svg class="ic s18"><use href="#plane-mode" /></svg>
        <svg class="ic s18"><use href="#volume" /></svg>
        <div class="clock"><span>1:51 PM</span><span>9/26/2022</span></div>
        <button type="button" class="notes" aria-label="Notifications">
          <svg class="ic s18" viewBox="0 0 18 18"><path d="M1 1h16v12H9l-4 4v-4H1z" fill="#fff" /><path d="M4 4h10M4 7h10M4 10h6" stroke="#111" stroke-width="1.200" /></svg>
          <span class="badge">1</span>
        </button>
      </div>
    </div>
  </div>
</template>

<style>
html, body { margin: 0; background: #4a4a4a; }
</style>

<style scoped>
.app { --line: #8c8c8c; --halo: #8a8a8a; display: flex; flex-direction: column; min-height: 100vh; background: #4a4a4a; color: #f0f0f0; font: 11px/13px "Open Sans", "Noto Sans", sans-serif; overflow: hidden; }
.app *, .app { box-sizing: border-box; }
button { display: flex; align-items: center; justify-content: center; margin: 0; padding: 0; border: 0; background: none; color: inherit; font: inherit; white-space: nowrap; }
.defs { position: absolute; width: 0; height: 0; }
.ic { display: block; flex: none; overflow: visible; }
.s14 { width: 14px; height: 14px; }
.s16 { width: 16px; height: 16px; }
.s18 { width: 18px; height: 18px; }
.s20 { width: 20px; height: 20px; }
.s24 { width: 24px; height: 24px; }
.caret { flex: none; width: 0; height: 0; border: 3px solid transparent; border-top-color: #f0f0f0; border-bottom: 0; }
.caret.dark { border-top-color: #222; }
.caret.gray { border-top-color: #8c8c8c; }
.caret.faded { border-top-color: #858585; }
.caret.up { border-bottom: 3px solid #f0f0f0; border-top: 0; }
.tri { width: 0; height: 0; border: 4px solid transparent; }
.tri.left { border-right-color: currentColor; border-left: 0; }
.tri.right { border-left-color: currentColor; border-right: 0; }
.stop { width: 1px; height: 8px; background: currentColor; }

.titlebar { position: relative; display: flex; align-items: center; height: 31px; border-bottom: 1px solid var(--line); font-size: 12px; }
.logo { position: absolute; z-index: 2; left: 10px; top: 0; display: flex; align-items: center; gap: 4px; width: 145px; height: 34px; padding-left: 5px; border: 1px solid #fff; border-top: 0; background: linear-gradient(135deg, #fff 40%, #cfcfcf); color: #d2232a; text-decoration: none; }
.logo-mark { width: 27px; height: 29px; }
.logo-text { font: italic 17px/20px Lato, sans-serif; }
.menus { display: flex; align-items: center; gap: 17px; height: 30px; padding-left: 182px; border-right: 1px solid #333; width: 515px; flex: none; font-size: 11px; }
.menus .pin { margin-left: 8px; }
.quick { display: flex; align-items: center; padding-left: 14px; }
.quick-item { display: flex; align-items: center; width: 26px; height: 26px; }
.quick-item.split { width: 40px; }
.quick-item > button:first-child { width: 26px; height: 24px; }
.quick-item .drop { width: 12px; height: 24px; }
.quick-item.active { border: 1px solid #111; width: 40px; background: #4a4a4a; }
.quick-item.active > button:first-child { background: #242424; }
.doc-title { flex: 1; padding-left: 325px; color: #c8c8c8; font-size: 11px; }
.title-right { display: flex; align-items: center; gap: 8px; padding-right: 4px; color: #111; --halo: #9a9a9a; }
.search { display: flex; align-items: center; gap: 5px; width: 201px; height: 22px; padding: 0 5px; border: 1px solid #111; background: #ececf2; }
.search input { flex: 1; min-width: 0; padding: 0; border: 0; background: none; color: #444; font: 11px/18px "Open Sans", sans-serif; }
.search input::placeholder { color: #555; opacity: 1; }
.help { width: 17px; color: #1c1c1c; font: 700 17px/20px "Liberation Sans", sans-serif; text-shadow: 0 0 2px #ccc, 0 0 1px #ccc; }
.help-drop { width: 8px; }

.ribbon { display: flex; height: 86px; padding: 6px 0 2px; border-bottom: 1px solid #4a4a4a; }
.group { display: flex; padding-left: 2px; border-right: 1px solid var(--line); }
.group:first-child { padding-left: 6px; }
.big { flex-direction: column; justify-content: flex-start; padding-top: 12px; }
.big.top { position: relative; padding-top: 5px; }
.big .ic { margin-bottom: 1px; }
.big .caret { position: absolute; bottom: 9px; }
.instant { width: 60px; border: 1px solid #0d0d0d; background: #2a2a2a; }
.column { display: flex; flex-direction: column; padding-left: 3px; }
.column button { justify-content: flex-start; gap: 5px; height: 26px; }

.tabs { display: flex; height: 23px; background: #fff; }
.tabs > button { flex: none; border: 1px solid var(--line); border-left: 0; background: #2f2f2f; font-size: 12px; }
.tabs > button.on { background: #4a4a4a; border-bottom-color: #4a4a4a; border-top-color: #4a4a4a; font-size: 11px; font-weight: 700; }
.mdi { display: flex; gap: 8px; align-items: center; margin-left: auto; padding: 8px 11px 0 0; color: #8d8d8d; --halo: transparent; border-top: 1px solid var(--line); flex: 1; justify-content: flex-end; }

.workspace { display: flex; flex: 1; min-height: 0; }
.rail { width: 47px; flex: none; padding: 2px 0 0 3px; }
.grip { height: 2px; margin-bottom: 9px; background: repeating-linear-gradient(90deg, #ddd 0 2px, transparent 2px 4px); margin-right: 2px; }
.rail-group { padding-bottom: 8px; background: linear-gradient(#222 0 1px, #8c8c8c 1px 3px) no-repeat 2px calc(100% - 3px) / 40px 2px; }
.rail-row { display: flex; align-items: center; height: 26px; gap: 4px; }
.rail-row button { width: 27px; height: 26px; }
.rail-row .pressed { border: 1px solid #0d0d0d; background: #2a2a2a; }
.muted .ic { fill: #535353; stroke: #757575; stroke-width: 1px; }

.side { display: flex; flex: 1; min-width: 0; }
.manager { position: relative; display: flex; flex-direction: column; width: 243px; flex: none; border-left: 1px solid #bcc8c8; border-right: 1px solid var(--line); padding-right: 2px; }
.handle { display: flex; align-items: center; justify-content: center; height: 19px; margin: 2px 0 3px; border-top: 1px solid #98a8a8; border-bottom: 1px solid var(--line); }
.knob { width: 8px; height: 8px; border-radius: 50%; background: radial-gradient(#eee 20%, #999 70%); }
.manager-tabs { position: relative; display: flex; height: 25px; border-top: 1px solid var(--line); background: #2f2f2f; }
.manager-tabs > button { width: 40px; border-right: 1px solid var(--line); border-bottom: 1px solid var(--line); }
.manager-tabs > button.on { background: #4a4a4a; border-bottom: 0; }
.pager { display: flex; flex: 1; margin: 6px 0 0 1px; color: #111; background: #e8e8e8; }
.pager button { flex: 1; border: 1px solid #999; background: #f2f2f2; }
.filter { display: flex; align-items: center; height: 26px; margin: 1px 1px 0 4px; padding-left: 3px; border: 1px solid var(--line); background: #565656; }
.filter input { flex: 1; min-width: 0; border: 0; background: none; color: #fff; }
.root { display: flex; align-items: center; gap: 4px; height: 22px; padding-left: 3px; margin-top: 1px; overflow: hidden; white-space: nowrap; }
.tree { margin: 0; padding: 0 0 0 9px; list-style: none; }
.tree li { display: flex; align-items: center; height: 22px; }
.twist { width: 0; height: 0; margin-right: 10px; border: 4px solid transparent; border-right: 0; }
.twist.show { border-left-color: #eee; }
.node { display: flex; align-items: center; gap: 5px; height: 22px; padding: 0 4px 0 2px; white-space: nowrap; }
.node.selected { background: #0078d7; }
.node-icon { position: relative; }
.node-icon b { position: absolute; inset: 4px 0 0; color: #1f6f9f; font: 700 13px/14px "Liberation Serif", serif; text-align: center; }
.rollbar { height: 3px; background: #3f8fc0; }
.hscroll { display: flex; height: 17px; margin-top: auto; margin-bottom: 5px; background: #f0f0f0; }
.hscroll button { width: 17px; }
.chev { width: 8px; height: 10px; fill: none; stroke: #333; stroke-width: 2; }
.track { flex: 1; }
.thumb { width: 75%; height: 15px; margin-top: 1px; background: #cdcdcd; }
.splitter { position: absolute; right: -9px; top: 402px; z-index: 3; width: 9px; height: 39px; border: 1px solid var(--line); border-left: 0; background: #4a4a4a; }

.viewport { position: relative; flex: 1; min-width: 0; background: #fff; color: #222; }
.scene { position: absolute; inset: 0; width: 100%; height: 100%; }
.edges { fill: none; stroke: #000; stroke-width: 1; }
.dim { font: 27px "DejaVu Sans", sans-serif; fill: #000; }
.axis { font: 10px "Liberation Sans", sans-serif; text-anchor: middle; }
.big-axis { font-size: 11px; }
.crumbs { position: absolute; left: 14px; top: 17px; }
.crumb-row { display: flex; width: 217px; height: 24px; border: 1px solid #c9c9c9; background: #f7f7f7; }
.crumb-row button { position: relative; padding: 0 7px; }
.crumb-row button:first-child { padding-left: 13px; }
.crumb-row button:not(:last-child)::after { content: ""; position: absolute; right: 1px; top: 3px; width: 15px; height: 15px; border: solid #c9c9c9; border-width: 1px 1px 0 0; transform: rotate(45deg) skew(15deg, 15deg); }
.crumb-row .named { gap: 5px; padding-right: 4px; }
.crumb-row .named::after { display: none; }
.crumb-row .face { flex: 1; padding: 0; background: #d4e6f5; }
.face i { width: 14px; height: 14px; border: 1px solid #31627c; background: #8ebedb; }
.crumb-sub { display: flex; align-items: center; gap: 4px; margin: 6px 0 0 118px; }
.crumb-sub button { gap: 4px; height: 22px; padding: 0 2px; border: 1px solid #c9c9c9; background: #fafafa; }
.heads-up { position: absolute; left: 638px; top: 5px; display: flex; }
.hud-item { display: flex; align-items: center; gap: 6px; padding-right: 6px; height: 20px; }
.hud-item .caret { margin-right: 2px; }

.context { position: absolute; left: 959px; top: 286px; width: 236px; height: 68px; padding: 3px; border: 1px solid #8c8c8c; background: #4a4a4a; }
.context-row { display: flex; align-items: center; height: 30px; }
.context-row button { width: 30px; height: 30px; }
.context-row .active { border: 1px solid #2d2d2d; background: #5b5b5b; }
.context-row .caret { margin: 0 4px; }
.tip { position: absolute; left: 59px; top: 67px; width: 48px; height: 20px; padding: 3px 0; border: 1px solid #767676; background: #fff; box-shadow: 3px 3px 2px #999; color: #575757; text-align: center; line-height: 12px; }
.task-pane { position: absolute; right: 0; top: 53px; width: 26px; border: 1px solid #8c8c8c; border-right: 0; background: #2f2f2f; }
.task-pane button { width: 25px; height: 24px; border-bottom: 1px solid #8c8c8c; }
.task-pane .on { background: #a9a9a9; }

.views { display: flex; height: 16px; padding-left: 47px; border-top: 1px solid var(--line); border-bottom: 1px solid var(--line); font-size: 12px; line-height: 14px; }
.views-pad { width: 27px; background: #b0b6b6; }
.step { width: 16px; background: #aaaaae; border-right: 1px solid #777; color: #85858a; }
.view { padding: 0 10px; width: 68px; border-right: 1px solid var(--line); background: #2f2f2f; }
.view.on { width: 58px; background: #4a4a4a; font-size: 11px; font-weight: 700; }
.view.wide { width: 108px; justify-content: flex-start; font-size: 11px; }
.status { display: flex; align-items: center; height: 18px; padding: 0 3px 0 2px; white-space: nowrap; }
.editing { margin-left: auto; margin-right: 30px; }
.rebuild { margin-right: 71px; }
.units { gap: 16px; margin-right: 28px; }

.taskbar { display: flex; height: 40px; background: #101010; color: #fff; }
.app-btn { width: 49px; height: 40px; flex: none; }
.app-btn.running { border-bottom: 2px solid #76b9ed; padding-top: 2px; width: 41px; margin: 0 4px; }
.app-btn.running.current { background: #333; width: 49px; margin: 0; }
.app-icon { position: relative; display: block; }
.mark { position: absolute; left: 1px; top: 5px; width: 13px; font-size: 11px; font-weight: 700; line-height: 14px; text-align: center; }
.mark.full { width: 22px; top: 3px; }
.sub { position: absolute; left: 0; bottom: 0; width: 24px; font-size: 7px; font-weight: 700; line-height: 7px; text-align: center; }
.sub.year { left: 2px; bottom: -1px; font-size: 9px; line-height: 8px; text-shadow: 0 0 1px #000, 0 0 2px #000; }
.tray { display: flex; align-items: center; gap: 7px; margin-left: auto; padding-right: 4px; }
.clock { display: flex; flex-direction: column; align-items: center; width: 56px; line-height: 18px; }
.notes { position: relative; width: 46px; height: 40px; padding-right: 11px; border-right: 1px solid #555; }
.badge { position: absolute; left: 16px; top: 19px; width: 16px; height: 16px; border: 1px solid #888; border-radius: 50%; background: #333; line-height: 14px; text-align: center; }
</style>
